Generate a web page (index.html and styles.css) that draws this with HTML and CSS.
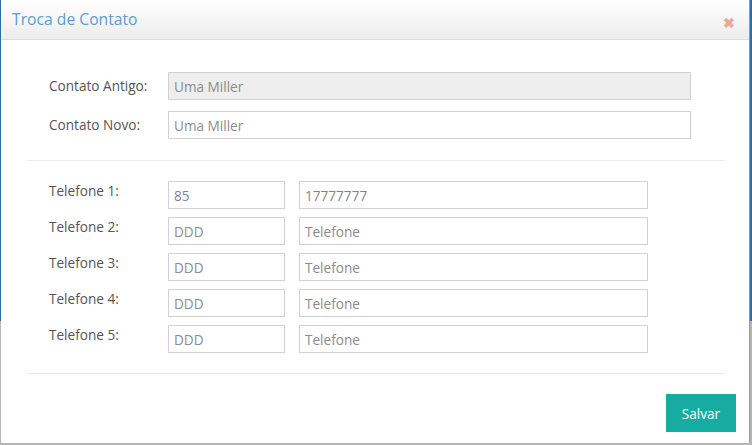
FILE: index.html
```html
<!DOCTYPE html>
<html lang="pt">
<head>
<meta charset="utf-8">
<title>Troca de Contato</title>
<link rel="stylesheet" href="styles.css">
</head>
<body>
<div class="modal">
  <div class="modal-header">
    <h4 class="modal-title">Troca de Contato</h4>
    <span class="close">&#10006;</span>
  </div>
  <div class="modal-body">
    <div class="row row-center">
      <label class="lbl">Contato Antigo:</label>
      <input class="inp inp-wide" type="text" value="Uma Miller" disabled>
    </div>
    <div class="row row-center gap11">
      <label class="lbl">Contato Novo:</label>
      <input class="inp inp-wide" type="text" placeholder="Uma Miller">
    </div>
    <hr class="sep sep-first">
    <div class="row row-top">
      <label class="lbl lbl-top">Telefone 1:</label>
      <input class="inp inp-ddd" type="text" value="85">
      <input class="inp inp-tel" type="text" value="17777777">
    </div>
    <div class="row row-top gap8">
      <label class="lbl lbl-top">Telefone 2:</label>
      <input class="inp inp-ddd" type="text" placeholder="DDD">
      <input class="inp inp-tel" type="text" placeholder="Telefone">
    </div>
    <div class="row row-top gap8">
      <label class="lbl lbl-top">Telefone 3:</label>
      <input class="inp inp-ddd" type="text" placeholder="DDD">
      <input class="inp inp-tel" type="text" placeholder="Telefone">
    </div>
    <div class="row row-top gap8">
      <label class="lbl lbl-top">Telefone 4:</label>
      <input class="inp inp-ddd" type="text" placeholder="DDD">
      <input class="inp inp-tel" type="text" placeholder="Telefone">
    </div>
    <div class="row row-top gap8">
      <label class="lbl lbl-top">Telefone 5:</label>
      <input class="inp inp-ddd" type="text" placeholder="DDD">
      <input class="inp inp-tel" type="text" placeholder="Telefone">
    </div>
    <hr class="sep sep-last">
    <div class="footer">
      <button class="btn" type="button">Salvar</button>
    </div>
  </div>
</div>
</body>
</html>
```

FILE: styles.css
```css
html, body {
  margin: 0;
  padding: 0;
  width: 752px;
  height: 445px;
  overflow: hidden;
}
body {
  background: linear-gradient(to bottom, #2f6ba6 0, #2f6ba6 321px, #b5b5b5 321px, #b5b5b5 100%);
  font-family: "Open Sans", "Noto Sans", sans-serif;
}
.modal {
  margin-left: 1px;
  width: 748px;
  height: 443px;
  background: #fff;
  border-right: 1px solid #9a9a9a;
  display: flex;
  flex-direction: column;
}
.modal-header {
  height: 39px;
  border-bottom: 1px solid #dcdcdc;
  background: linear-gradient(to bottom, #ffffff 0%, #ececec 100%);
  display: flex;
  align-items: center;
  justify-content: space-between;
  padding: 0 14px 0 11px;
}
.modal-title {
  margin: 0;
  font-weight: normal;
  font-size: 15.7px;
  color: #5f9ccd;
  position: relative;
  top: -1px;
}
.close {
  color: #eba89b;
  font-size: 14px;
  font-weight: bold;
  position: relative;
  top: 3px;
}
.modal-body {
  padding: 32px 24px 0 26px;
}
.row {
  display: flex;
}
.row-center {
  align-items: center;
}
.row-top {
  align-items: flex-start;
}
.gap11 { margin-top: 11px; }
.gap8 { margin-top: 8px; }
.lbl {
  box-sizing: border-box;
  width: 141px;
  padding-left: 22px;
  font-size: 13.6px;
  color: #555;
  line-height: 18px;
}
.lbl-top {
  line-height: 20px;
}
.inp {
  box-sizing: border-box;
  height: 28px;
  border: 1px solid #d2d2d2;
  padding: 0 5px;
  font-family: "Open Sans", "Noto Sans", sans-serif;
  font-size: 13.6px;
  color: #858585;
  background: #fff;
  outline: none;
  margin: 0;
}
.inp::placeholder {
  color: #8c8c8c;
  opacity: 1;
}
.inp:disabled {
  background: #eeeeee;
  color: #8c8c8c;
}
.inp-wide { width: 523px; }
.inp-ddd { width: 117px; }
.inp-tel { width: 349px; margin-left: 14px; }
.sep {
  border: 0;
  border-top: 1px solid #ececec;
  width: 698px;
}
.sep-first { margin: 21px 0 20px 0; }
.sep-last { margin: 20px 0 20px 0; }
.footer {
  display: flex;
  justify-content: flex-end;
  margin-right: -11px;
}
.btn {
  width: 70px;
  height: 38px;
  border: 0;
  background: #17aca2;
  color: #fff;
  font-family: "Open Sans", "Noto Sans", sans-serif;
  font-size: 13.6px;
  padding: 0;
  margin: 0;
}
```
